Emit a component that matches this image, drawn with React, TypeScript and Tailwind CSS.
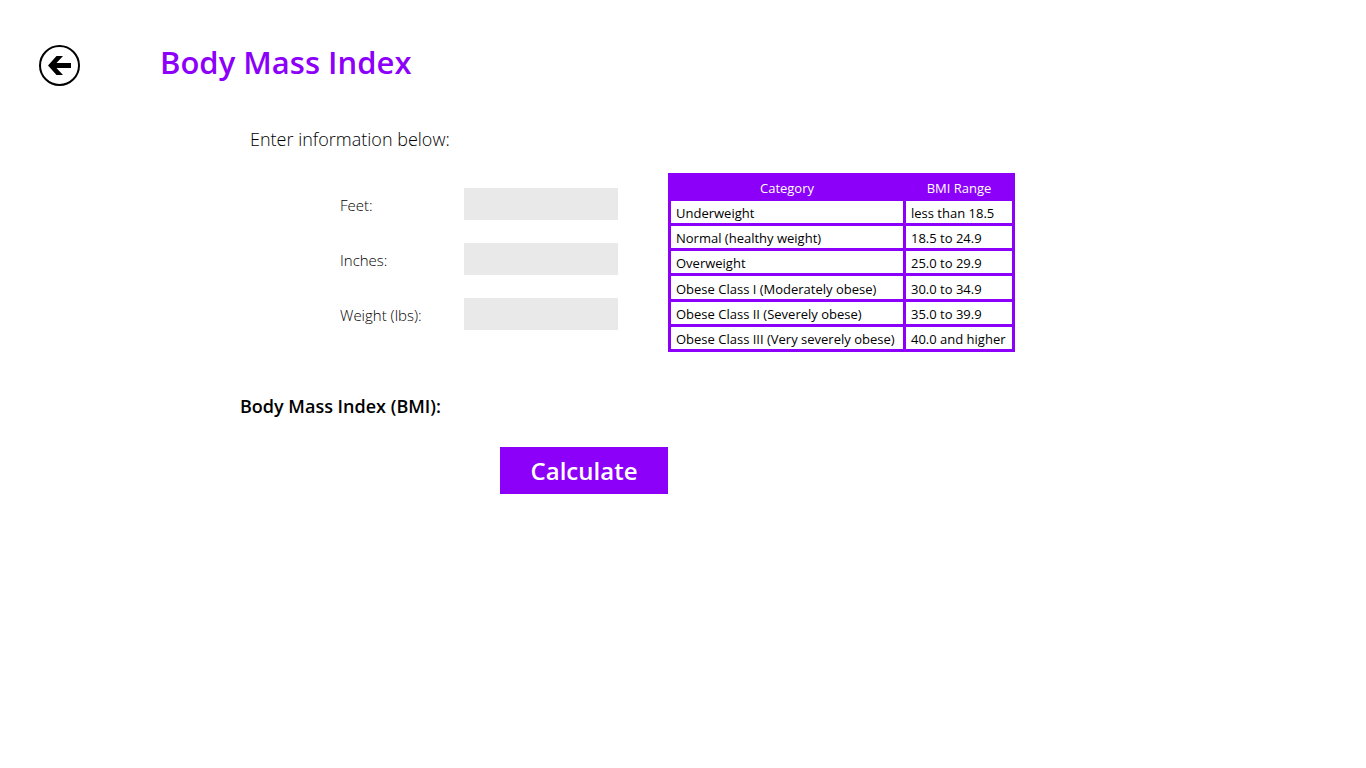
import { useState } from "react";
import type { FormEvent } from "react";

const fields = [
  { id: "feet", label: "Feet:" },
  { id: "inches", label: "Inches:" },
  { id: "weight", label: "Weight (lbs):" },
] as const;

const categories = [
  ["Underweight", "less than 18.5"],
  ["Normal (healthy weight)", "18.5 to 24.9"],
  ["Overweight", "25.0 to 29.9"],
  ["Obese Class I (Moderately obese)", "30.0 to 34.9"],
  ["Obese Class II (Severely obese)", "35.0 to 39.9"],
  ["Obese Class III (Very severely obese)", "40.0 and higher"],
];

function BackButton() {
  return (
    <button type="button" aria-label="Back" className="size-[41px] shrink-0 rounded-full">
      <svg viewBox="0 0 41 41" className="block size-full" aria-hidden="true">
        <circle cx="20.5" cy="20.5" r="19.5" fill="none" stroke="black" strokeWidth="2" />
        <path d="M9 20.5 17.5 11H24L17.5 18H32V23H17.5L24 30H17.5Z" fill="black" />
      </svg>
    </button>
  );
}

function CategoryTable() {
  return (
    <table className="h-[179px] w-[347px] shrink-0 border-collapse self-start text-[13px] leading-[18px]">
      <thead>
        <tr className="bg-[#8c00fa] text-white">
          <th scope="col" className="w-[235px] border-3 border-[#8c00fa] pt-[3px] pb-px font-normal">
            Category
          </th>
          <th scope="col" className="border-3 border-[#8c00fa] pt-[3px] pb-px font-normal">
            BMI Range
          </th>
        </tr>
      </thead>
      <tbody>
        {categories.map(([name, range]) => (
          <tr key={name}>
            <td className="whitespace-nowrap border-3 border-[#8c00fa] pt-[3px] pb-px pl-[5px]">{name}</td>
            <td className="whitespace-nowrap border-3 border-[#8c00fa] pt-[3px] pb-px pl-[5px]">{range}</td>
          </tr>
        ))}
      </tbody>
    </table>
  );
}

export default function App() {
  const [values, setValues] = useState({ feet: "", inches: "", weight: "" });
  const [bmi, setBmi] = useState("");

  function calculate(event: FormEvent) {
    event.preventDefault();
    const height = Number(values.feet) * 12 + Number(values.inches);
    setBmi(height > 0 ? ((Number(values.weight) * 703) / (height * height)).toFixed(1) : "");
  }

  return (
    <div className="min-h-screen bg-white font-['Open_Sans','Noto_Sans',sans-serif] text-black">
      <header className="flex items-start gap-20 pt-[45px] pl-[39px]">
        <BackButton />
        <h1 className="-mt-1 text-[31px] leading-[42px] font-semibold text-[#8c00fa]">
          Body Mass Index
        </h1>
      </header>
      <form onSubmit={calculate} className="pt-[39px] pl-60">
        <h2 className="pl-[10px] text-lg leading-7 font-light">Enter information below:</h2>
        <div className="flex gap-[50px] pt-5">
          <div className="flex flex-col gap-[23px] pt-[15px] pl-[100px]">
            {fields.map(({ id, label }) => (
              <div key={id} className="flex items-center">
                <label htmlFor={id} className="w-[124px] pt-[2px] text-[15px] leading-5 font-light">
                  {label}
                </label>
                <input
                  id={id}
                  inputMode="decimal"
                  value={values[id]}
                  onChange={(e) => setValues({ ...values, [id]: e.target.value })}
                  className="h-8 w-[154px] bg-[#e9e9e9] px-2 text-[15px]"
                />
              </div>
            ))}
          </div>
          <CategoryTable />
        </div>
        <p className="pt-10 text-lg leading-7 font-semibold">
          Body Mass Index (BMI): <output htmlFor="feet inches weight">{bmi}</output>
        </p>
        <div className="pt-[27px] pl-[260px]">
          <button
            type="submit"
            className="h-[47px] w-[168px] bg-[#8c00fa] text-2xl leading-8 font-semibold text-white"
          >
            Calculate
          </button>
        </div>
      </form>
    </div>
  );
}
